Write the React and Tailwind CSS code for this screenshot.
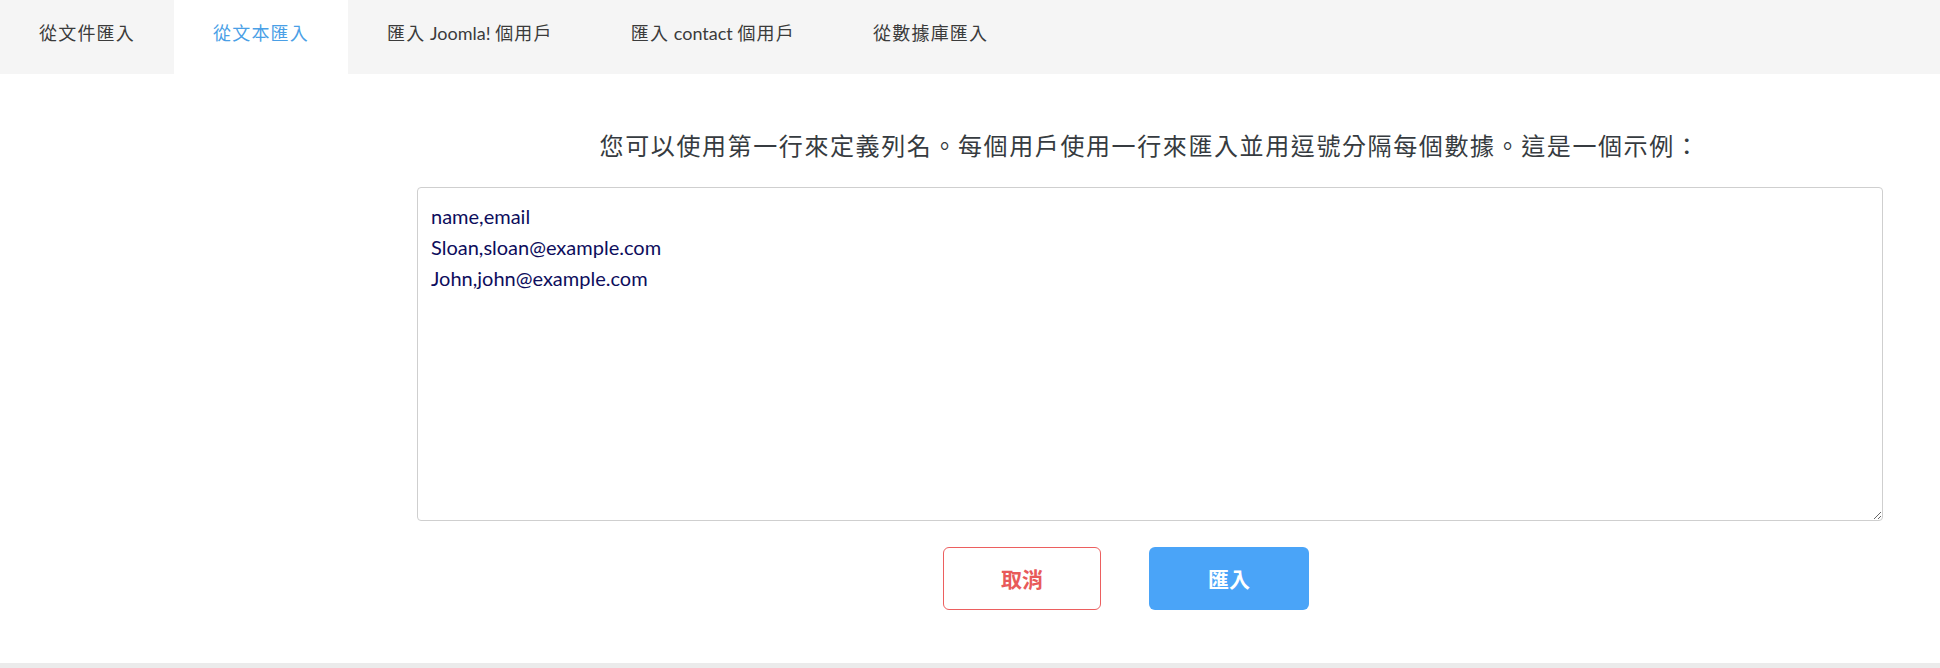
import React, { useState } from 'react';

// latin words in the labels keep normal spacing
const tabs = [
    ['從文件匯入'],
    ['從文本匯入'],
    ['匯入', ' Joomla! ', '個用戶'],
    ['匯入', ' contact ', '個用戶'],
    ['從數據庫匯入'],
];

const sample = 'name,email\nSloan,sloan@example.com\nJohn,john@example.com';

const App = () => {
    const [active, setActive] = useState(1);

    return (
        <div className="w-full min-h-[668px] bg-white flex flex-col font-['Noto_Sans_CJK_TC','Noto_Sans_CJK_SC',sans-serif]">
            {/* tab strip */}
            <div className="flex h-[74px] bg-[#f5f5f5]">
                {tabs.map((parts, i) => (
                    <button
                        key={i}
                        onClick={() => setActive(i)}
                        className={
                            i === active
                                ? 'h-full px-[39px] pb-[8px] bg-white text-[#4a9fe6] text-[18px] tracking-[1.2px] font-["Lato","Noto_Sans_CJK_TC",sans-serif]'
                                : 'h-full px-[39px] pb-[8px] text-[#3b3b3b] text-[18px] tracking-[1.2px] font-["Lato","Noto_Sans_CJK_TC",sans-serif]'
                        }
                    >
                        {parts.map((p, j) =>
                            j === 1 ? (
                                <span key={j} className="tracking-normal whitespace-pre">
                                    {p}
                                </span>
                            ) : (
                                <span key={j}>{p}</span>
                            )
                        )}
                    </button>
                ))}
            </div>

            <div className="grid grid-cols-[417px_1466px] pt-[55px]">
                <div />
                <div className="flex flex-col">
                    <p className="text-center text-[24px] leading-[32px] tracking-[1.6px] text-[#363b40]">
                        您可以使用第一行來定義列名。每個用戶使用一行來匯入並用逗號分隔每個數據。這是一個示例：
                    </p>

                    <textarea
                        defaultValue={sample}
                        className="mt-[26px] h-[334px] w-full rounded-[4px] border border-[#cfcfcf] px-[13px] py-[13px] font-['Lato',sans-serif] text-[20px] leading-[31px] text-[#0d0d5c] outline-none"
                    />

                    <div className="flex justify-center gap-[48px] pt-[26px] pr-[48px]">
                        <button className="h-[63px] w-[158px] rounded-[6px] border border-[#ec5f5f] bg-white text-[21px] font-bold text-[#e85a5a]">
                            取消
                        </button>
                        <button className="h-[63px] w-[160px] rounded-[6px] bg-[#4aa4f8] text-[21px] font-bold text-white">
                            匯入
                        </button>
                    </div>
                </div>
            </div>

            <div className="mt-auto h-[5px] bg-[#ebebeb]" />
        </div>
    );
};

export default App;
